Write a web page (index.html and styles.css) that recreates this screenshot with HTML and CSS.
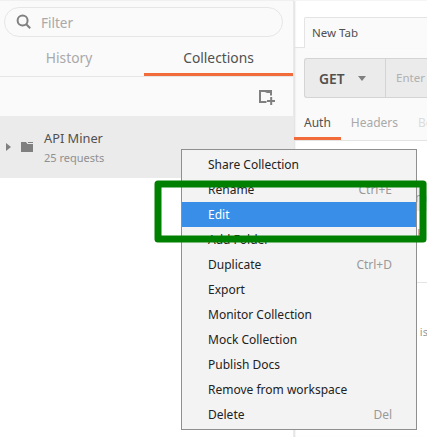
FILE: index.html
```html
<!DOCTYPE html>
<html lang="en">
<head>
<meta charset="utf-8">
<title>Collections</title>
<link rel="stylesheet" href="styles.css">
</head>
<body>
<div class="app">
  <aside class="sidebar">
    <div class="sidebar-head">
      <div class="filter">
        <svg class="search-icon" width="16" height="16" viewBox="0 0 16 16"><circle cx="6.6" cy="6.6" r="5" fill="none" stroke="#808080" stroke-width="2"/><path d="M10.2 10.2l4 4" stroke="#808080" stroke-width="2"/></svg>
        <span>Filter</span>
      </div>
      <div class="side-tabs">
        <div class="side-tab">History</div>
        <div class="side-tab selected">Collections</div>
      </div>
      <div class="toolbar">
        <svg width="18" height="16" viewBox="0 0 18 16"><path d="M8.5 12H2V1H13V5.5" fill="none" stroke="#808080" stroke-width="2"/><path d="M7 1.5l1.5 1H13" fill="none" stroke="#808080"/><path d="M13.2 7v8M9 11h8" stroke="#808080" stroke-width="2"/></svg>
      </div>
    </div>
    <div class="collection">
      <svg class="caret" width="5" height="8" viewBox="0 0 5 8"><path d="M0 0l5 4-5 4z" fill="#808080"/></svg>
      <svg class="folder" width="12" height="10" viewBox="0 0 12 10"><path d="M0 0h5l1.5 2H12v8H0z" fill="#808080"/><path d="M7 .5h5" stroke="#808080"/></svg>
      <div>
        <div class="name">API Miner</div>
        <div class="count">25 requests</div>
      </div>
    </div>
  </aside>
  <main class="main">
    <div class="tab-strip"><div class="spacer"></div><div class="request-tab">New Tab</div></div>
    <div class="builder">
      <div class="url-bar">
        <div class="method">GET<svg width="8" height="5" viewBox="0 0 8 5"><path d="M0 0h8L4 5z" fill="#808080"/></svg></div>
        <div class="url">Enter</div>
      </div>
      <div class="sub-tabs">
        <div class="sub-tab active">Auth</div>
        <div class="sub-tab">Headers</div>
        <div class="sub-tab faded">Bo</div>
      </div>
    </div>
    <div class="content">
      <div class="response-row">m</div>
      <div class="response-tabs">H</div>
      <div class="hint">t is</div>
    </div>
  </main>
  <div class="menu">
    <div class="item">Share Collection</div>
    <div class="item">Rename<span>Ctrl+E</span></div>
    <div class="item current">Edit</div>
    <div class="item">Add Folder</div>
    <div class="item">Duplicate<span>Ctrl+D</span></div>
    <div class="item">Export</div>
    <div class="item">Monitor Collection</div>
    <div class="item">Mock Collection</div>
    <div class="item">Publish Docs</div>
    <div class="item">Remove from workspace</div>
    <div class="item">Delete<span>Del</span></div>
  </div>
  <svg class="highlight" width="273" height="63" viewBox="0 0 273 63"><rect x="4" y="4" width="265" height="55" fill="none" stroke="#008000" stroke-width="7" stroke-linejoin="round"/></svg>
</div>
</body>
</html>
```
FILE: styles.css
```css
* { box-sizing: border-box; }
body { margin: 0; font-family: "Noto Sans", "Open Sans", sans-serif; font-size: 13px; overflow: hidden; }
svg { display: block; flex: none; }
.app { position: relative; display: flex; width: 427px; height: 437px; overflow: hidden; background: #fff; }
.sidebar { width: 294px; flex: none; border-right: 1px solid #eaeaea; }
.sidebar-head { height: 116px; background: #fafafa; border-top: 1px solid #f0f0f0; padding-top: 6px; }
.filter { display: flex; align-items: center; gap: 9px; width: 279px; height: 30px; margin-left: 4px; padding-left: 11px; border: 1px solid #e6e6e6; border-radius: 15px; color: #a9a9a9; font-size: 13.5px; }
.filter span { position: relative; top: 1px; }
.side-tabs { display: flex; height: 40px; border-bottom: 1px solid #e6e6e6; }
.side-tab { width: 144px; padding: 12px 8px 0 2px; line-height: 18px; text-align: center; font-size: 13.8px; color: #a9a9a9; }
.side-tab.selected { flex: 1; color: #505050; border-bottom: 3px solid #f26b3a; padding: 12px 0 0; }
.toolbar { padding: 13px 0 0 258px; }
.collection { display: flex; align-items: center; height: 62px; background: #ebebeb; padding-left: 6px; }
.folder { margin: 0 11px 0 10px; }
.name { color: #505050; font-size: 12.8px; line-height: 19px; margin-top: 3px; }
.count { color: #909090; font-size: 11px; line-height: 20px; }
.main { flex: 1; min-width: 0; overflow: hidden; box-shadow: inset 2px 0 2px -1px #ddd; }
.tab-strip { display: flex; height: 48px; padding-top: 16px; border-top: 1px solid #f5f5f5; }
.spacer { width: 10px; border-bottom: 1px solid #e4e4e4; }
.request-tab { flex: 1; background: #fafafa; border: 1px solid #e4e4e4; border-width: 1px 0 0 1px; border-radius: 2px 0 0; padding-left: 7px; color: #505050; font-size: 11.5px; line-height: 30px; }
.builder { height: 93px; padding-top: 10px; background: #fafafa; border-bottom: 1px solid #e4e4e4; box-shadow: inset 2px 0 2px -1px #ddd; }
.url-bar { display: flex; height: 40px; margin-left: 10px; background: #ebebeb; border: 1px solid #d4d4d4; border-right: 0; border-radius: 3px 0 0 3px; }
.method { flex: none; display: flex; align-items: center; gap: 13px; width: 81px; padding: 1px 0 0 14px; border-right: 1px solid #d4d4d4; color: #505050; font-size: 13.8px; font-weight: 600; }
.method svg { margin-top: -1px; }
.url { padding-left: 10px; line-height: 37px; font-size: 11.5px; color: #b0b0b0; white-space: nowrap; }
.sub-tabs { display: flex; height: 42px; white-space: nowrap; font-size: 12px; line-height: 50px; color: #a9a9a9; }
.sub-tab { margin-right: 20px; }
.sub-tab.active { width: 47px; height: 42px; padding-left: 10px; margin-right: 10px; color: #505050; border-bottom: 3px solid #f26b3a; }
.sub-tab:nth-child(2) { margin-left: 0; }
.faded { width: 9px; margin-right: 0; overflow: hidden; color: #dcdcdc; }
.content { padding-top: 40px; color: #999; }
.response-row { height: 30px; padding-left: 121px; background: #ebebeb; line-height: 32px; }
.response-tabs { height: 72px; padding-left: 123px; border-bottom: 1px solid #e4e4e4; line-height: 44px; }
.hint { padding: 40px 0 0 119px; line-height: 18px; white-space: nowrap; font-size: 11px; }
.menu { position: absolute; left: 181px; top: 149px; width: 236px; height: 281px; padding: 2px 0; background: #f3f3f3; border: 1px solid #8f8f8f; }
.item { display: flex; justify-content: space-between; height: 25px; padding: 0 24px 0 26px; line-height: 25px; font-size: 12px; color: #222; }
.item span { color: #999; }
.item.current { color: #fff; background: #398ee7; }
.highlight { position: absolute; left: 154px; top: 180px; }
```
